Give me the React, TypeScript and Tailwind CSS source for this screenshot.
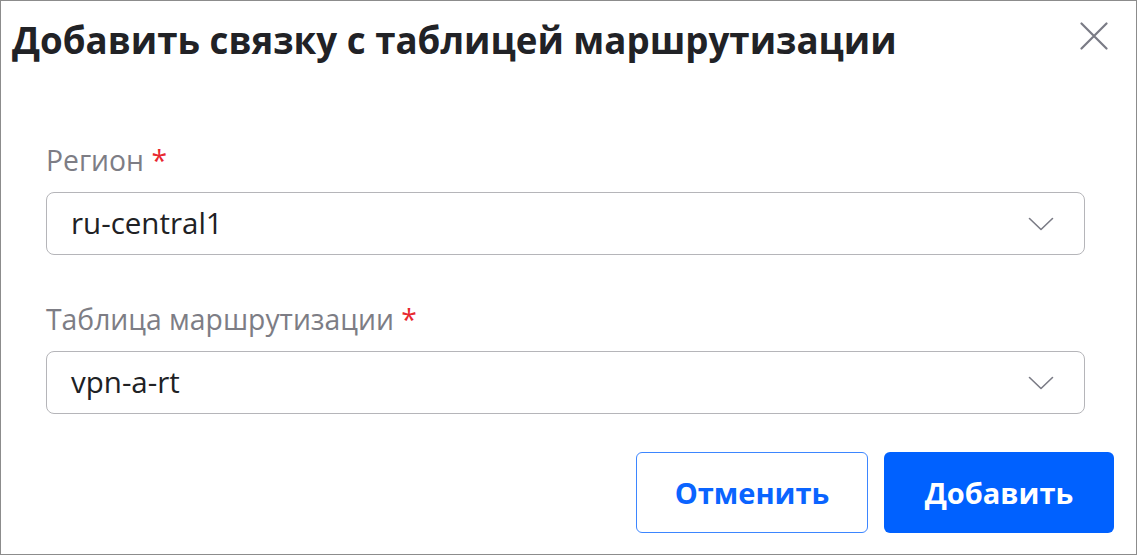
import React from "react";

const Chevron = () => (
  <svg width="26" height="14" viewBox="0 0 26 14" fill="none">
    <path d="M1.5 1.5 L13 12.5 L24.5 1.5" stroke="#7a7b85" strokeWidth="1.6" strokeLinecap="round" strokeLinejoin="round" />
  </svg>
);

function Field({ label, value }: { label: string; value: string }) {
  return (
    <div className="flex flex-col">
      <div className="text-[28.3px] leading-[34px] text-[#7d7d85]">
        {label} <span className="text-[#e8282f]">*</span>
      </div>
      <div className="mt-[15px] flex h-[63px] items-center justify-between rounded-[8px] border border-[#b5b5b9] pl-[24px] pr-[30px]">
        <span className="text-[29.5px] text-[#202124]">{value}</span>
        <Chevron />
      </div>
    </div>
  );
}

export default function App() {
  return (
    <div
      className="flex h-[555px] w-[1137px] flex-col border border-[#8c8c8c] bg-white"
      style={{ fontFamily: '"Open Sans", "Noto Sans", sans-serif' }}
    >
      <div className="flex items-start justify-between pl-[11px] pr-[28px] pt-[14px]">
        <h1 className="text-[36.7px] font-bold leading-[50px] text-[#212226]">
          Добавить связку с таблицей маршрутизации
        </h1>
        <svg className="mt-[7px]" width="28" height="28" viewBox="0 0 28 28" fill="none">
          <path d="M1.5 1.5 L26.5 26.5 M26.5 1.5 L1.5 26.5" stroke="#7a7b85" strokeWidth="2.2" strokeLinecap="round" />
        </svg>
      </div>
      <div className="flex flex-col gap-[47px] pl-[45px] pr-[51px] pt-[78px]">
        <Field label="Регион" value="ru-central1" />
        <Field label="Таблица маршрутизации" value="vpn-a-rt" />
      </div>
      <div className="flex justify-end gap-[16px] pr-[22px] pt-[38px]">
        <button className="h-[81px] w-[232px] rounded-[6px] border border-[#3d86ff] bg-white text-[29px] font-bold text-[#0a64ff]">
          Отменить
        </button>
        <button className="h-[81px] w-[230px] rounded-[6px] bg-[#0061ff] text-[29px] font-bold text-white">
          Добавить
        </button>
      </div>
    </div>
  );
}
